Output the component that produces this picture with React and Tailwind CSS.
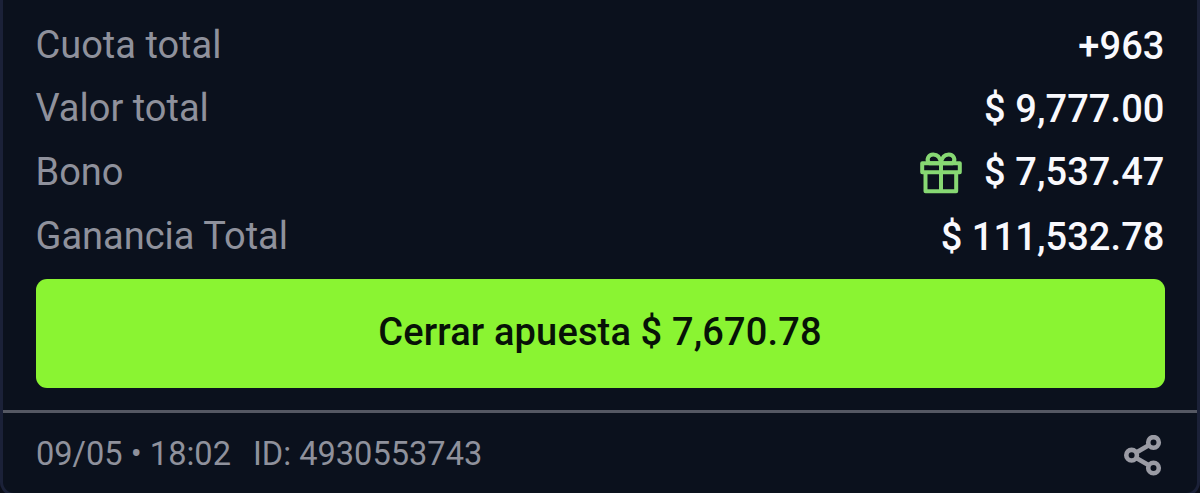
function GiftIcon() {
  return (
    <svg className="h-[42px] w-[42px]" viewBox="0 0 42 42" fill="none" stroke="#87d873" strokeWidth="4" strokeLinejoin="round">
      <rect x="2.2" y="11.3" width="37.6" height="9" />
      <path d="M5.5 20.3V39.3H36.2V20.3M21 11.3V39.3" />
      <path d="M21 11.3H9.2C5.8 7.4 8.6 2.4 13.2 2.4C17.8 2.4 20.4 6 21 11.3ZM21 11.3H32.8C36.2 7.4 33.4 2.4 28.8 2.4C24.2 2.4 21.6 6 21 11.3Z" />
    </svg>
  );
}

function ShareIcon() {
  return (
    <svg className="h-[42px] w-[38px]" viewBox="0 0 38 42" fill="none" stroke="#9a9ba4" strokeWidth="4.6">
      <circle cx="7.6" cy="20.2" r="5.3" />
      <circle cx="29.5" cy="7.4" r="5.3" />
      <circle cx="29.5" cy="33" r="5.3" />
      <path d="M12.3 17.4L24.8 10.2M12.3 23L24.8 30.2" />
    </svg>
  );
}

function Row({ label, value, icon, className }) {
  return (
    <div className={`flex items-center justify-between ${className}`}>
      <span className="text-[#8f919c]">{label}</span>
      <span className="flex items-center gap-[22px] pt-px font-medium tracking-[0.08px] text-[#f9f9fd]">
        {icon}
        <span>{value}</span>
      </span>
    </div>
  );
}

export default function App() {
  return (
    <div className="h-[493px] overflow-hidden bg-[#0b0e18] font-['Roboto',sans-serif]">
      <div className="flex h-[496px] flex-col rounded-b-[14px] border-x-[3px] border-b-[3px] border-[#1b2138] bg-[#0b111d]">
        <div className="flex flex-col px-[32.5px] pt-[14px] text-[38px] leading-[63px]">
          <Row label="Cuota total" value="+963" className="h-[63px]" />
          <Row label="Valor total" value="$ 9,777.00" className="h-[63px]" />
          <Row label="Bono" value="$ 7,537.47" icon={<GiftIcon />} className="h-[64px]" />
          <Row label="Ganancia Total" value="$ 111,532.78" className="h-[65px]" />
          <button className="mt-[10px] h-[109px] rounded-[11px] bg-[#8af432] pb-[2px] font-medium tracking-[0.15px] text-[#071207]">
            Cerrar apuesta $ 7,670.78
          </button>
        </div>
        <div className="mt-[22px] flex flex-1 items-start justify-between border-t-[3px] border-[#555863] pt-[21px] pr-[35px] pl-[33px] text-[32.6px] leading-[40px] text-[#8f919c]">
          <div className="flex gap-[22px]">
            <span>09/05 • 18:02</span>
            <span>ID: 4930553743</span>
          </div>
          <div className="pt-px">
            <ShareIcon />
          </div>
        </div>
      </div>
    </div>
  );
}
